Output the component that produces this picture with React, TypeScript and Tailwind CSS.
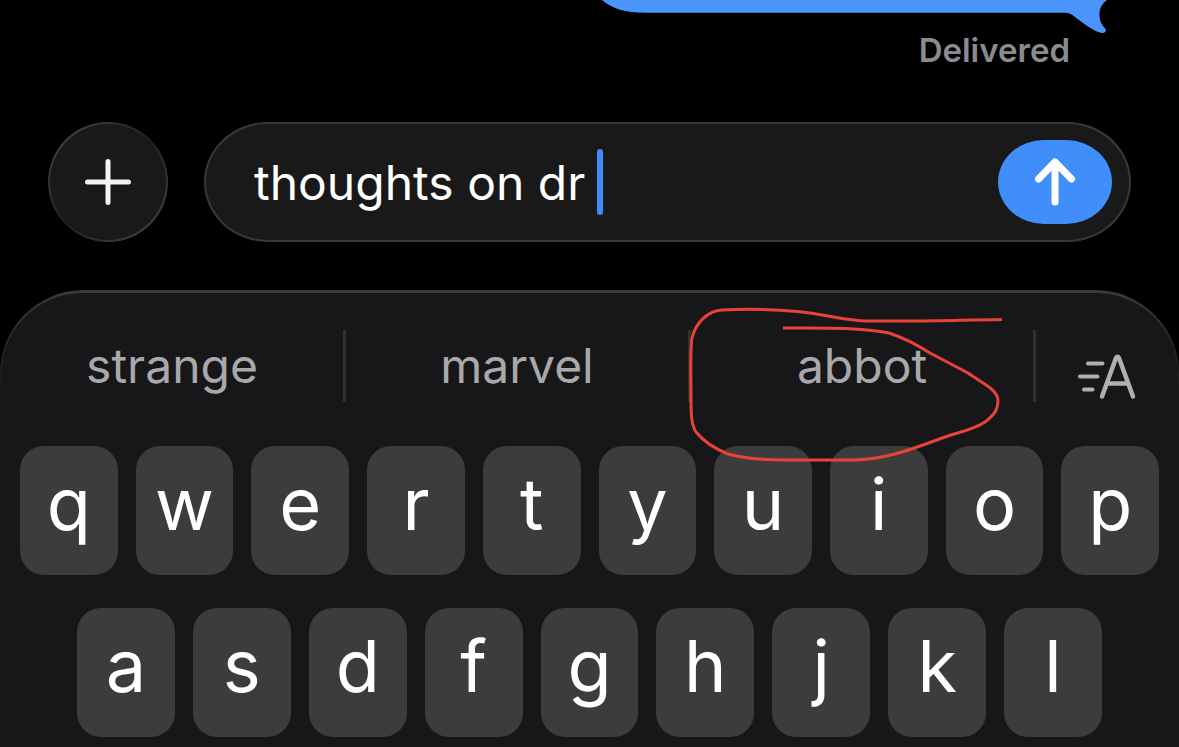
import { useState } from "react";

const suggestions = ["strange", "marvel", "abbot"];
const topRow = ["q", "w", "e", "r", "t", "y", "u", "i", "o", "p"];
const middleRow = ["a", "s", "d", "f", "g", "h", "j", "k", "l"];

function Key({ letter }: { letter: string }) {
  return (
    <button
      type="button"
      className="flex h-[129px] min-w-0 flex-1 justify-center rounded-3xl bg-[#3c3c3c] pt-2 text-[72px] leading-[100px] text-white"
    >
      {letter}
    </button>
  );
}

function Bubble() {
  return (
    <div className="flex justify-end pr-[72px]">
      <svg width="506" height="34" viewBox="601 0 506 34" aria-hidden="true">
        <path
          d="M602 0C613 9 625 12.700 645 12.700H1065C1069 12.700 1071 14 1075 17C1084 24 1092 30 1100 32.500C1104 34 1107 32 1105.500 29C1100 23 1099.500 19 1099.500 14C1099.500 8 1102 4 1107 0Z"
          fill="#4a94fb"
        />
      </svg>
    </div>
  );
}

function Annotation() {
  return (
    <svg
      className="pointer-events-none absolute top-[13px] left-[680px]"
      width="330"
      height="165"
      viewBox="680 303 330 165"
      aria-hidden="true"
    >
      <path
        d="M1002 319.500C965 320 940 321 912 321H867C845 321 825 314 797 311.500C770 309 740 309 722 310C708 311 696 322 692 338C690 350 691 375 691 396C691 412 691 425 696 432C705 443 718 450 728 454C748 460 775 460 805 460H852C885 460 912 449 945 437C960 432 975 429 985 422C997 413 998 407 998 400C997 389 982 383 968 373L930 353C913 342 898 336 889 333C860 327 820 328 783 328"
        fill="none"
        stroke="#ea4238"
        strokeWidth="3"
        strokeLinejoin="round"
      />
    </svg>
  );
}

export default function App() {
  const [text, setText] = useState("thoughts on dr");

  return (
    <div className="flex min-h-screen flex-col bg-black font-['Inter','Liberation_Sans',sans-serif]">
      <Bubble />
      <p className="pr-[109px] text-right text-[33px] leading-8 font-semibold text-[#8b8b90]">
        Delivered
      </p>

      <div className="mt-14 flex items-center gap-9 px-12">
        <button
          type="button"
          aria-label="Add attachment"
          className="flex size-[120px] shrink-0 items-center justify-center rounded-full bg-linear-135 from-[#4a4a4a] via-[#202020] to-[#4a4a4a] p-[2px]"
        >
          <span className="flex size-full items-center justify-center rounded-full bg-[#191919]">
            <svg width="48" height="48" viewBox="0 0 48 48" aria-hidden="true">
              <path d="M24 3.500V44.500M3.500 24H44.500" stroke="#f4f4f4" strokeWidth="5" strokeLinecap="round" />
            </svg>
          </span>
        </button>

        <div className="flex h-[120px] min-w-0 flex-1 items-center rounded-[64px/60px] border-2 border-[#383838] bg-[#191919] pr-[17px] pl-12">
          <input
            aria-label="Message"
            value={text}
            onChange={(e) => setText(e.target.value)}
            className="[field-sizing:content] max-w-full min-w-0 bg-transparent pt-[2px] text-[48px] leading-[60px] text-white outline-none"
          />
          <span className="ml-3 h-[66px] w-[6px] shrink-0 rounded-full bg-[#3f8cf8]" />
          <button
            type="button"
            aria-label="Send"
            className="ml-auto flex h-[84px] w-[114px] shrink-0 items-center justify-center rounded-[46px/42px] bg-[#3f8ef9]"
          >
            <svg width="44" height="50" viewBox="0 0 44 50" fill="none" aria-hidden="true">
              <path
                d="M22 5V45M5.500 22L22 5L38.500 22"
                stroke="#fff"
                strokeWidth="7"
                strokeLinecap="round"
                strokeLinejoin="round"
              />
            </svg>
          </button>
        </div>
      </div>

      <div className="relative mt-12 flex-1 rounded-t-[84px] bg-linear-to-b from-[#3a3a3b] from-0% to-[#171719] to-25% px-px pt-[3px]">
        <div className="h-full rounded-t-[82px] bg-[#171719] pb-[10px]">
          <div className="flex pt-[37px]">
            {suggestions.map((word) => (
              <button
                key={word}
                type="button"
                className="h-[72px] min-w-0 flex-1 border-r-[3px] border-[#303032] text-[48px] leading-[72px] text-[#a9a9ac]"
              >
                {word}
              </button>
            ))}
            <button
              type="button"
              aria-label="Text formatting"
              className="flex h-[72px] w-[142px] shrink-0 items-end justify-center pb-[2px]"
            >
              <svg width="58" height="48" viewBox="1078 352 58 48" fill="none" aria-hidden="true">
                <path
                  d="M1102 396.500L1116 358Q1117.500 355.500 1119 358L1133 396.500M1107 383.500H1128"
                  stroke="#b0b0b3"
                  strokeWidth="4.500"
                  strokeLinecap="round"
                  strokeLinejoin="round"
                />
                <path
                  d="M1088 363.500H1102.500M1080 376.500H1097.500M1084 389.500H1092.500"
                  stroke="#b0b0b3"
                  strokeWidth="4"
                  strokeLinecap="round"
                />
              </svg>
            </button>
          </div>

          <div className="mt-11 flex gap-[18px] px-[19px]">
            {topRow.map((letter) => (
              <Key key={letter} letter={letter} />
            ))}
          </div>
          <div className="mt-[33px] flex gap-[18px] px-[76px]">
            {middleRow.map((letter) => (
              <Key key={letter} letter={letter} />
            ))}
          </div>
        </div>
        <Annotation />
      </div>
    </div>
  );
}
